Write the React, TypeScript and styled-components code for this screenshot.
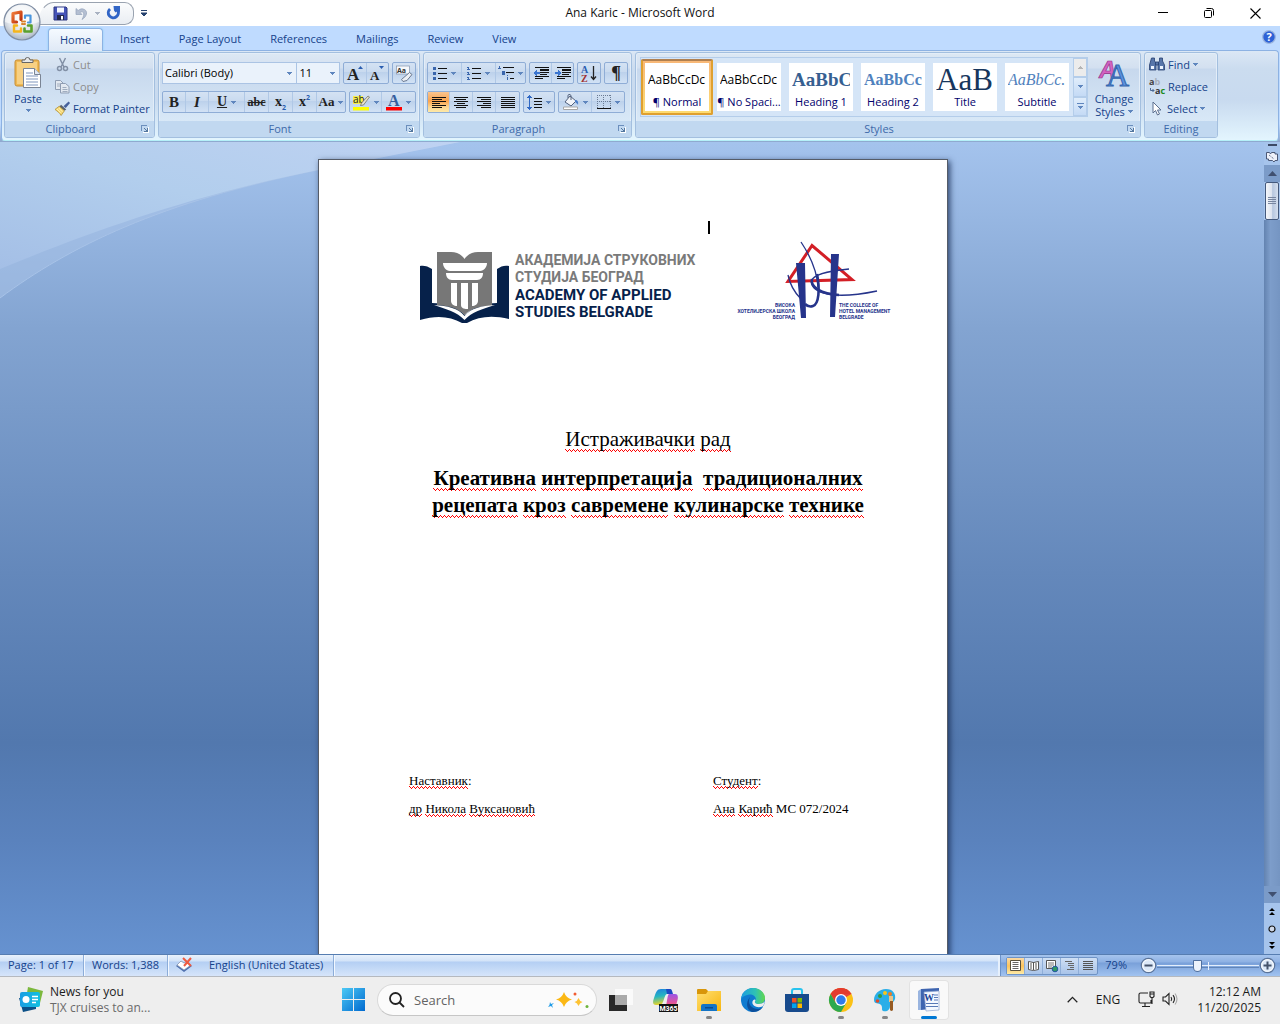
import React from "react";
import styled, { createGlobalStyle, css } from "styled-components";

const ui = `"Open Sans", "Noto Sans", sans-serif`;
const serif = `"Liberation Serif", "Times New Roman", serif`;
const navy = "#15428b";

const GlobalStyle = createGlobalStyle`
  *, *::before, *::after { box-sizing: border-box; }
  body { margin: 0; font-family: ${ui}; font-size: 11px; overflow: hidden; }
  button, input, select { font: inherit; color: inherit; margin: 0; }
  button { border: 0; padding: 0; background: none; cursor: default; }
  svg { display: block; flex: none; overflow: visible; }
`;

/* ---------- window frame ---------- */

const Window = styled.div`
  position: relative;
  display: flex;
  flex-direction: column;
  height: 100vh;
  background: #fff;
`;

const TitleBar = styled.header`
  display: grid;
  grid-template-columns: 1fr auto 1fr;
  align-items: center;
  height: 26px;
  background: #fff;
`;

const TitleText = styled.h1`
  margin: 0;
  font-size: 12px;
  font-weight: 400;
  line-height: 26px;
  color: #111;
`;

const QuickAccess = styled.div`
  display: flex;
  align-items: center;
  gap: 7px;
  padding-left: 38px;
`;

const QuickPill = styled.div`
  display: flex;
  align-items: center;
  gap: 7px;
  height: 23px;
  width: 96px;
  padding-left: 14px;
  border: 1px solid #9aa3b0;
  border-left-color: transparent;
  border-radius: 0 12px 12px 0;
  border-top-left-radius: 20px 30px;
  background: linear-gradient(#fbfcfd, #e9edf2);
`;

const WindowButtons = styled.div`
  display: flex;
  justify-content: flex-end;
  padding-right: 2px;
`;

const WindowButton = styled.button`
  display: grid;
  place-items: center;
  width: 46px;
  height: 26px;
`;

const OfficeButton = styled.button`
  position: absolute;
  left: 2px;
  top: 2px;
  z-index: 2;
`;

const TabBar = styled.nav`
  display: flex;
  align-items: flex-end;
  height: 24px;
  padding: 0 4px 0 46px;
  background: #bfdbff;
`;

const Tab = styled.button<{ $active?: boolean }>`
  height: 22px;
  margin: 0 3px 0 2px;
  padding: 0 11px 2px;
  border: 1px solid transparent;
  border-bottom: 0;
  border-radius: 4px 4px 0 0;
  color: ${navy};
  line-height: 19px;
  white-space: nowrap;
  ${(p) =>
    p.$active &&
    css`
      position: relative;
      z-index: 1;
      height: 23px;
      margin-bottom: -1px;
      border-color: #8db2e3;
      background: linear-gradient(#f5faff, #dfe9f6);
      box-shadow: 0 0 2px #7dd0f5;
    `}
`;

const HelpButton = styled.button`
  margin: 0 0 6px auto;
`;

/* ---------- ribbon ---------- */

const Ribbon = styled.div`
  padding-bottom: 1px;
  background: linear-gradient(#bfdbff 80%, #8ea8ce);
`;

const RibbonPanel = styled.div`
  display: flex;
  gap: 3px;
  margin: 0 1px;
  height: 91px;
  padding: 1px 2px 2px;
  border: 1px solid #8db2e3;
  border-bottom-color: #b4f0f8;
  border-radius: 4px;
  background: linear-gradient(#dbe7f5, #cbdcef 20%, #c8daef 55%, #e3f5fe);
`;

const Group = styled.section<{ $w: number }>`
  display: flex;
  flex-direction: column;
  width: ${(p) => p.$w}px;
  flex: none;
  border: 1px solid #a3bfdf;
  border-radius: 3px;
  box-shadow: inset 0 0 0 1px #e3edf8;
  background: linear-gradient(#dde8f4, #d3e0f0 15px, #c7d8ed 16px, #d8e8f7 68px);
  overflow: hidden;
`;

const GroupBody = styled.div`
  display: flex;
  flex: 1;
`;

const GroupFooter = styled.footer<{ $launcher: boolean }>`
  display: grid;
  grid-template-columns: ${(p) => (p.$launcher ? "1fr 18px" : "1fr")};
  align-items: center;
  height: 16px;
  background: #c1d8f0;
  color: #3e6aaa;
  text-align: center;
`;

const GroupTitle = styled.h2`
  margin: 0;
  font-size: 11px;
  font-weight: 400;
  line-height: 16px;
`;

const LauncherButton = styled.button`
  display: grid;
  place-items: center;
`;

const ToolRows = styled(GroupBody)`
  flex-direction: column;
  gap: 7px;
  padding: 9px 3px 0;
`;

const ToolRow = styled.div`
  display: flex;
  gap: 3px;
`;

const ToolSet = styled.div`
  display: flex;
  height: 22px;
  border: 1px solid #8fadd6;
  border-radius: 2px;
  background: linear-gradient(#d4e2f3, #c9daef 45%, #bcd1eb 46%, #d2e2f5);
`;

const ToolButton = styled.button<{ $w: number; $on?: boolean }>`
  display: flex;
  align-items: center;
  justify-content: center;
  gap: 4px;
  width: ${(p) => p.$w}px;
  height: 20px;
  border-right: 1px solid #b0c8e6;
  &:last-child {
    border-right: 0;
  }
  ${(p) => p.$on && `background: linear-gradient(#f9c48f, #fba34c 45%, #fdd58f 75%, #fde9a8);`}
`;

const Glyph = styled.span<{ $size?: number; $italic?: boolean; $line?: string }>`
  font-family: ${serif};
  font-weight: 700;
  font-size: ${(p) => p.$size ?? 15}px;
  line-height: 18px;
  font-style: ${(p) => (p.$italic ? "italic" : "normal")};
  text-decoration: ${(p) => p.$line ?? "none"};
  color: #222;
  sub,
  sup {
    font-family: ${ui};
    font-size: 7px;
    line-height: 0;
    color: #2a5db0;
  }
`;

const ComboBox = styled.label<{ $w: number }>`
  display: grid;
  grid-template-columns: 1fr 14px;
  align-items: center;
  width: ${(p) => p.$w}px;
  height: 22px;
  border: 1px solid #abc4e4;
  background: #eaf2fb;
  & + & {
    margin-left: -4px;
  }
  svg {
    grid-area: 1 / 2;
    justify-self: center;
    pointer-events: none;
  }
`;

const ComboSelect = styled.select`
  grid-area: 1 / 1 / 2 / 3;
  height: 20px;
  padding: 0 2px 2px;
  border: 0;
  appearance: none;
  background: transparent;
  color: #000;
`;

const CommandColumn = styled.div`
  display: flex;
  flex-direction: column;
  flex: 1;
  padding-top: 1px;
`;

const Command = styled.button<{ $off?: boolean }>`
  display: flex;
  align-items: center;
  gap: 3px;
  height: 22px;
  padding: 0 4px 2px;
  color: ${(p) => (p.$off ? "#8d8d8d" : navy)};
  white-space: nowrap;
`;

const BigButton = styled.button<{ $w: number }>`
  display: flex;
  flex-direction: column;
  align-items: center;
  width: ${(p) => p.$w}px;
  padding-top: 4px;
  color: ${navy};
  line-height: 13px;
  & > svg:first-child {
    margin-bottom: 3px;
  }
  & > svg:last-child {
    margin-top: 4px;
  }
`;

const BigLabel = styled.span`
  display: flex;
  align-items: center;
  gap: 3px;
`;

const Gallery = styled.div`
  display: flex;
  height: 60px;
  margin: 4px 2px 0 4px;
  border: 1px solid #b4cdea;
  background: #d5e5f7;
`;

const StyleCard = styled.button<{ $on?: boolean }>`
  display: flex;
  width: 72px;
  height: 56px;
  margin-top: 1px;
  padding: 4px;
  border-radius: 2px;
  ${(p) =>
    p.$on &&
    css`
      padding: 2px;
      border: 2px solid #dfa030;
      border-top-color: #b08050;
      background: linear-gradient(#f8b878, #fddc72);
    `}
`;

const StyleFace = styled.span`
  display: flex;
  flex-direction: column;
  justify-content: flex-end;
  width: 64px;
  height: 48px;
  padding: 0 3px 2px;
  background: #fff;
  color: #00006b;
  text-align: center;
  white-space: nowrap;
  overflow: hidden;
`;

const Preview = styled.span<{ $color: string; $size: number; $serif?: boolean; $bold?: boolean; $italic?: boolean }>`
  display: block;
  height: 28px;
  line-height: 28px;
  overflow: hidden;
  text-align: left;
  font-family: ${(p) => (p.$serif ? serif : ui)};
  font-size: ${(p) => p.$size}px;
  font-weight: ${(p) => (p.$bold ? 700 : 400)};
  font-style: ${(p) => (p.$italic ? "italic" : "normal")};
  color: ${(p) => p.$color};
`;

const StyleName = styled.span`
  line-height: 15px;
  margin: 0 -3px;
`;

const GalleryScroll = styled.div`
  display: grid;
  grid-template-rows: repeat(3, 1fr);
  width: 14px;
`;

const GalleryStep = styled.button<{ $off?: boolean }>`
  display: grid;
  place-items: center;
  border: 1px solid #b4cdea;
  background: ${(p) => (p.$off ? "#ececec" : "linear-gradient(#e0edfb, #c4daf5)")};
`;

/* ---------- document ---------- */

const Workspace = styled.main`
  position: relative;
  display: flex;
  flex: 1;
  min-height: 0;
  background: linear-gradient(#a4c3ed, #83a4d1 23%, #6488bb 53%, #5278ae 74%, #5a82bd 86%, #6692d0);
`;

const Swoosh = styled.svg`
  position: absolute;
  left: 0;
  top: 0;
`;

const Scroller = styled.div`
  position: relative;
  flex: 1;
  padding-left: 2px;
  overflow: hidden;
`;

const Paper = styled.article`
  width: 630px;
  height: 894px;
  margin: 17px auto 0;
  padding: 61px 60px 0 90px;
  border: 1px solid #555c68;
  background: #fff;
  box-shadow: 2px 2px 6px rgba(20, 40, 80, 0.8);
  font-family: ${serif};
  color: #000;
`;

const Caret = styled.div`
  width: 2px;
  height: 13px;
  margin: 0 0 8px 299px;
  background: #000;
`;

const Logos = styled.div`
  display: flex;
  align-items: flex-start;
  justify-content: space-between;
  height: 84px;
  padding: 0 2px 0 11px;
`;

const Academy = styled.div`
  display: flex;
  gap: 6px;
  padding-top: 9px;
`;

const AcademyName = styled.div`
  padding-top: 1px;
  font-family: Roboto, sans-serif;
  font-weight: 700;
  font-size: 14px;
  line-height: 17px;
  color: #7a7a7a;
  white-space: nowrap;
`;

const AcademyLatin = styled.div`
  padding-top: 1px;
  color: #06214a;
  font-size: 15px;
`;

const Kind = styled.p`
  margin: 100px 0 12px;
  font-size: 21px;
  line-height: 27px;
  text-align: center;
`;

const Topic = styled.h3`
  margin: 0 0 248px;
  font-size: 21px;
  line-height: 27px;
  text-align: center;
  white-space: nowrap;
`;

const People = styled.div`
  display: grid;
  grid-template-columns: 304px 1fr;
  font-size: 13px;
  line-height: 28px;
  white-space: nowrap;
`;

const Misspelt = styled.span`
  padding-bottom: 1px;
  background:
    linear-gradient(90deg, #f00 1px, transparent 1px) 0 calc(100% - 2px) / 4px 1px repeat-x,
    linear-gradient(90deg, #f00 1px, transparent 1px) 1px calc(100% - 1px) / 2px 1px repeat-x,
    linear-gradient(90deg, #f00 1px, transparent 1px) 2px 100% / 4px 1px repeat-x;
`;

const ScrollColumn = styled.div`
  position: relative;
  display: flex;
  flex-direction: column;
  width: 16px;
  background: #a6c4ec;
`;

const ScrollStep = styled.button<{ $h: number; $track?: boolean }>`
  display: grid;
  place-items: center;
  height: ${(p) => p.$h}px;
  background: ${(p) => (p.$track ? "#7b9bc8" : "transparent")};
`;

const Track = styled.div`
  flex: 1;
  background: linear-gradient(90deg, #6383b0, #7d9dca 40%, #7595c2);
`;

const Thumb = styled.div`
  display: grid;
  place-items: center;
  height: 38px;
  margin: 0 1px;
  border: 1px solid #44597c;
  border-radius: 2px;
  background: linear-gradient(90deg, #f4f6fa, #dbe2ee 50%, #b6c6de 55%, #d5dfee);
`;

/* ---------- status bar ---------- */

const StatusBar = styled.footer`
  display: flex;
  height: 23px;
  border-top: 1px solid #567db1;
  border-bottom: 1px solid #b5b9bf;
  background: linear-gradient(#e8f1fc, #d3e3f8 6px, #b4cff3 7px, #d6e5fa);
  color: ${navy};
`;

const StatusItem = styled.button<{ $w: number }>`
  display: flex;
  align-items: center;
  width: ${(p) => p.$w}px;
  padding: 0 0 2px 8px;
  border-right: 1px solid #8cadd9;
  box-shadow: 1px 0 #f2f8ff;
  white-space: nowrap;
`;

const StatusRight = styled.div`
  display: flex;
  align-items: center;
  gap: 7px;
  margin-left: auto;
  padding: 0 4px 0 5px;
  border-left: 1px solid #6d93c9;
  box-shadow: -2px 0 #e6f0fc;
  background: linear-gradient(#a5c4ee, #8eb1e3 7px, #79a0d9 8px, #a1c3f0);
`;

const Views = styled.div`
  display: flex;
  border: 1px solid #6f93c5;
  border-radius: 2px;
  background: linear-gradient(#cfdff4, #a9c4e9);
`;

const ViewButton = styled.button<{ $on?: boolean }>`
  display: grid;
  place-items: center;
  width: 18px;
  height: 16px;
  border-right: 1px solid #8faed8;
  background: ${(p) => (p.$on ? "linear-gradient(#fbd9a4, #fcc45c, #fdeaa8)" : "none")};
  &:last-child {
    border-right: 0;
  }
`;

const ZoomLevel = styled.button`
  padding-bottom: 2px;
`;

const ZoomControls = styled.div`
  display: flex;
  align-items: center;
  margin-left: 6px;
`;

const ZoomRange = styled.input`
  width: 102px;
  height: 16px;
  appearance: none;
  background:
    linear-gradient(#eaf2fc, #eaf2fc) 50% 50% / 1px 8px no-repeat,
    linear-gradient(#e4eefb, #e4eefb) 0 50% / 100% 1px no-repeat,
    linear-gradient(#6285b8, #6285b8) 0 9px / 100% 1px no-repeat;
  &::-webkit-slider-thumb {
    appearance: none;
    width: 9px;
    height: 12px;
    border: 1px solid #50709f;
    border-radius: 1px 1px 5px 5px;
    background: #edf3fb;
  }
`;

/* ---------- taskbar ---------- */

const Taskbar = styled.footer`
  display: grid;
  grid-template-columns: 1fr auto 1fr;
  align-items: center;
  height: 47px;
  padding-bottom: 2px;
  background: #eee;
  color: #1b1b1b;
  font-size: 12px;
`;

const News = styled.button`
  display: flex;
  align-items: center;
  gap: 7px;
  padding-left: 18px;
  text-align: left;
  line-height: 16px;
`;

const NewsDetail = styled.span`
  display: block;
  color: #6a6a6a;
`;

const Apps = styled.div`
  display: flex;
  align-items: center;
  gap: 4px;
  padding-left: 2px;
`;

const AppButton = styled.button<{ $state?: "open" | "active" }>`
  position: relative;
  display: grid;
  place-items: center;
  width: 40px;
  height: 40px;
  border-radius: 4px;
  ${(p) => p.$state === "active" && `background: #f9f9f9; box-shadow: inset 0 0 0 1px #e2e2e2;`}
  ${(p) =>
    p.$state &&
    css`
      &::after {
        content: "";
        position: absolute;
        bottom: 1px;
        width: ${p.$state === "active" ? 16 : 6}px;
        height: 3px;
        border-radius: 2px;
        background: ${p.$state === "active" ? "#0078d4" : "#858585"};
      }
    `}
`;

const SearchBox = styled.label`
  display: flex;
  align-items: center;
  gap: 9px;
  width: 220px;
  height: 32px;
  padding: 0 7px 0 11px;
  border: 1px solid #d9d9d9;
  border-bottom-color: #c6c6c6;
  border-radius: 16px;
  background: #fbfbfb;
`;

const SearchInput = styled.input`
  flex: 1;
  min-width: 0;
  padding: 0;
  border: 0;
  outline: 0;
  background: none;
  font-size: 13px;
  &::placeholder {
    color: #636363;
    opacity: 1;
  }
`;

const Tray = styled.div`
  display: flex;
  align-items: center;
  justify-content: flex-end;
  gap: 18px;
  padding-right: 19px;
`;

const TrayIcons = styled.button`
  display: flex;
  gap: 7px;
`;

const Clock = styled.button`
  text-align: right;
  line-height: 16px;
`;

/* ---------- icons ---------- */

const Arrow = ({ color = "#5f86be", up = false }: { color?: string; up?: boolean }) => (
  <svg width="5" height="3" viewBox="0 0 5 3" shapeRendering="crispEdges">
    <path d={up ? "M2 0h1v1h1v1h1v1H0V2h1V1h1z" : "M0 0h5v1H4v1H3v1H2V2H1V1H0z"} fill={color} />
  </svg>
);

const Launcher = () => (
  <svg width="8" height="8" viewBox="0 0 8 8" shapeRendering="crispEdges">
    <path d="M0 6V0h6v1H1v5z" fill="#6c8fbd" />
    <path d="M3 3h1v1h1v1h1V3h1v4H3V6h2V5H4V4H3z" fill="#54779f" />
    <path d="M2 7h6v1H2zM7 2h1v6H7z" fill="#fff" />
  </svg>
);

/* horizontal strokes given as [x, y, width] */
const Strokes = ({ w, h, lines, color = "#111", children }: { w: number; h: number; lines: number[][]; color?: string; children?: React.ReactNode }) => (
  <svg width={w} height={h} viewBox={`0 0 ${w} ${h}`} shapeRendering="crispEdges">
    {lines.map(([x, y, n]) => (
      <rect key={`${x}-${y}`} x={x} y={y} width={n} height="1" fill={color} />
    ))}
    {children}
  </svg>
);

const AlignIcon = ({ mode }: { mode: "l" | "c" | "r" | "j" }) => {
  const widths = mode === "j" ? [14, 14, 14, 14, 14, 14] : [14, 10, 14, 8, 14, 10];
  const x = (n: number) => (mode === "r" ? 14 - n : mode === "c" ? (14 - n) / 2 : 0);
  return <Strokes w={14} h={11} lines={widths.map((n, i) => [x(n), i * 2, n])} />;
};

const OfficeOrb = () => (
  <svg width="40" height="40" viewBox="0 0 40 40">
    <defs>
      <radialGradient id="orb" cx=".5" cy=".35" r=".7">
        <stop offset="0" stopColor="#fff" />
        <stop offset=".6" stopColor="#dfe4ea" />
        <stop offset="1" stopColor="#9daabb" />
      </radialGradient>
      <linearGradient id="orbRed" x2="1" y2="1">
        <stop stopColor="#f07a3a" />
        <stop offset="1" stopColor="#b92b05" />
      </linearGradient>
    </defs>
    <circle cx="20" cy="20" r="18" fill="url(#orb)" stroke="#7f8da3" strokeWidth="1.2" />
    <path d="M3 20a17 17 0 0134 0c-10 4-24 4-34 0z" fill="#fff" opacity=".55" />
    <g fill="none" strokeLinejoin="round" strokeLinecap="round">
      <path d="M14.500 20H11v-8.500l8-1.500v7.500" stroke="url(#orbRed)" strokeWidth="3.200" />
      <path d="M23 16v-2.500h5.500v7H26" stroke="#4a95dc" strokeWidth="2.200" />
      <path d="M15 23.500h-3v6h7v-3" stroke="#f5b51c" strokeWidth="2.400" />
      <path d="M26 23.500h3.500v6h-7v-3" stroke="#5aa02c" strokeWidth="2.600" />
      <path d="M20 19.500h1M22.500 19.500h.5M20 22h1M22.500 22h.5" stroke="#d9822a" strokeWidth="2" />
    </g>
  </svg>
);

const SaveIcon = () => (
  <svg width="15" height="15" viewBox="0 0 15 15">
    <path d="M1 1h12l1 1v12H1z" fill="#4553b8" stroke="#2f3880" />
    <path d="M4 1.500h7v5H4z" fill="#f3f6ff" />
    <path d="M4 9h7v5H4z" fill="#23294f" />
    <path d="M8 10h2v3.500H8z" fill="#fff" />
  </svg>
);

const UndoIcon = () => (
  <svg width="13" height="13" viewBox="0 0 13 13" fill="none">
    <path d="M1 1.500v6h6L5 5.500c3-2 5 .5 3 5l-1 2c5-3 6-8 2.500-10C7 1.200 5 2 3.200 3.500z" fill="#b4bfd2" stroke="#93a2ba" strokeWidth=".7" />
  </svg>
);

const RedoIcon = () => (
  <svg width="14" height="14" viewBox="0 0 14 14" fill="none">
    <path d="M3 3A5 5 0 1010.500 4" stroke="#3165c6" strokeWidth="3" />
    <path d="M6.500 0H13v6L10.500 5 8.500 6.500 7 4.500z" fill="#3165c6" />
  </svg>
);

const PasteIcon = () => (
  <svg width="28" height="32" viewBox="0 0 28 32">
    <rect x="1" y="3" width="24" height="26" rx="2" fill="#efb954" stroke="#c78e35" />
    <rect x="3" y="5" width="20" height="22" fill="#f7d083" />
    <path d="M8 5V3h3a2.500 2.500 0 015 0h3v2.500H8z" fill="#e8e8e8" stroke="#666" />
    <path d="M9.500 11.500h11l6 6v13h-17z" fill="#fff" stroke="#7a8494" />
    <path d="M20.500 11.500v6h6" fill="#dfe7f2" stroke="#7a8494" />
    <path d="M12 16h7M12 19h12M12 22h12M12 25h12M12 28h12" stroke="#7f96bd" />
  </svg>
);

const CutIcon = () => (
  <svg width="15" height="15" viewBox="0 0 15 15" fill="none" stroke="#8290a6" strokeWidth="1.500">
    <path d="M4.500 1l4.500 9M10.500 1L6 10" />
    <circle cx="4.500" cy="11.500" r="2" />
    <circle cx="10.500" cy="11.500" r="2" />
  </svg>
);

const CopyIcon = () => (
  <svg width="15" height="15" viewBox="0 0 15 15" fill="#e3e9f1" stroke="#8f9db3">
    <path d="M.5 1.500h5l3 3v6h-8z" />
    <path d="M5.500 4.500h5l3.500 3v6.500H5.500z" />
    <path d="M2 5h3M2 7h3M7.500 8.500h4M7.500 10.500h5M7.500 12.500h5" strokeWidth=".8" />
  </svg>
);

const PainterIcon = () => (
  <svg width="15" height="15" viewBox="0 0 16 15">
    <path d="M14.500 0L16 1.500 11.500 7 9 5z" fill="#46619b" />
    <path d="M6.500 3.500L12 8.500 10 10 4.500 5.500z" fill="#5b626e" />
    <path d="M4.500 5L10 10l-3.500 5C5 12 3 11 0 8.500z" fill="#f4d673" stroke="#a68325" strokeWidth=".7" />
    <path d="M2 8l4 4M4 7l4 4" stroke="#fff4c0" />
  </svg>
);

const ClearIcon = () => (
  <svg width="17" height="17" viewBox="0 0 17 17">
    <rect x=".5" y="1" width="13" height="8" fill="#f7f9fc" stroke="#8293ad" strokeWidth=".7" />
    <text x="1" y="8" fontSize="7" fontWeight="700" fontFamily="Open Sans, sans-serif" fill="#333">Aa</text>
    <path d="M13.500 7.500l2.500 2-5 6-4 1-1.500-2z" fill="#eceff5" stroke="#69788f" />
  </svg>
);

const ListIcon = ({ numbered }: { numbered?: boolean }) => (
  <Strokes w={14} h={13} lines={[[5, 1, 9], [5, 6, 9], [5, 11, 9]]}>
    {[0, 5, 10].map((y) => (
      <path key={y} d={numbered ? `M1 ${y}h1v3H1zM0 ${y + 2}h3v1H0zM0 ${y}h1v1H0z` : `M0 ${y}h3v3H0z`} fill="#3a66ad" />
    ))}
  </Strokes>
);

const MultiIcon = () => (
  <Strokes w={16} h={14} lines={[[5, 1, 11], [8, 6, 8], [12, 12, 4]]}>
    <path d="M1 0h1v3H1zM0 2h3v1H0zM4 5h3v4H4zM9 9h1v1H9zM9 11h1v3H9z" fill="#3a66ad" />
  </Strokes>
);

const IndentIcon = ({ right }: { right?: boolean }) => (
  <Strokes w={16} h={13} lines={[[2, 0, 14], [7, 2, 9], [7, 3, 9], [7, 5, 9], [7, 7, 7], [2, 9, 14], [2, 11, 8]]}>
    <path d={right ? "M0 5h3V3l4 3-4 3V7H0z" : "M7 5H4V3L0 6l4 3V7h3z"} fill="#3a75d0" />
  </Strokes>
);

const SortIcon = () => (
  <svg width="16" height="17" viewBox="0 0 16 17">
    <text x="0" y="8" fontSize="10" fontWeight="700" fontFamily="Liberation Serif, serif" fill="#2a5db0">A</text>
    <text x="0" y="17" fontSize="10" fontWeight="700" fontFamily="Liberation Serif, serif" fill="#a03030">Z</text>
    <path d="M12.500 1v13M10 11.500l2.500 3 2.500-3" stroke="#222" strokeWidth="1.300" fill="none" />
  </svg>
);

const SpacingIcon = () => (
  <Strokes w={15} h={15} lines={[[7, 3, 8], [7, 6, 8], [7, 9, 8], [7, 12, 8]]}>
    <path d="M2 3h1v9H2zM2 0h1v1h1v1h1v1H0V2h1V1h1zM0 12h5v1H4v1H3v1H2v-1H1v-1H0z" fill="#2f68c4" />
  </Strokes>
);

const BucketIcon = () => (
  <svg width="16" height="16" viewBox="0 0 16 16">
    <path d="M7 2l6 5-5 5-6-4z" fill="#f2f5fa" stroke="#52617c" />
    <path d="M5 4V1.500C5 0 8 0 8 2v4" fill="none" stroke="#52617c" />
    <path d="M12 6c3 0 3.500 2 3 5-1-2-2-2-3-3z" fill="#4a7dc9" />
    <path d="M.5 13h14v2.500H.5z" fill="#fff" stroke="#a6a6a6" />
  </svg>
);

const BorderIcon = () => (
  <svg width="14" height="14" viewBox="0 0 14 14" fill="none" shapeRendering="crispEdges">
    <path d="M.5 0v13M6.500 0v13M13.500 0v13M0 .5h14M0 6.500h14" stroke="#6a7b94" strokeDasharray="1 1" />
    <path d="M0 13.500h14" stroke="#111" />
  </svg>
);

const HighlightIcon = () => (
  <svg width="17" height="17" viewBox="0 0 17 17">
    <path d="M0 2h10v8H0z" fill="#f6ee4c" />
    <text x="0" y="9" fontSize="10" fontFamily="Open Sans, sans-serif" fill="#222">ab</text>
    <path d="M15 2l1.500 1-6 8-3 .5 1-2.500z" fill="#e8e4d0" stroke="#665" strokeWidth=".7" />
    <path d="M0 13h16v3.500H0z" fill="#ff0" />
  </svg>
);

const FontColorIcon = () => (
  <svg width="16" height="17" viewBox="0 0 16 17">
    <text x="2" y="12" fontSize="16" fontWeight="700" fontFamily="Liberation Serif, serif" fill="#365f9e">A</text>
    <path d="M0 13h16v3.500H0z" fill="red" />
  </svg>
);

const ChangeStylesIcon = () => (
  <svg width="30" height="32" viewBox="0 0 30 32">
    <text x="0" y="21" fontSize="24" fontWeight="700" fontStyle="italic" fontFamily="Liberation Sans, sans-serif" fill="#d263c0" stroke="#93308a" strokeWidth=".6">A</text>
    <text x="7" y="29" fontSize="32" fontFamily="Liberation Serif, serif" fill="#5c93e0" stroke="#3566ae" strokeWidth="1">A</text>
  </svg>
);

const FindIcon = () => (
  <svg width="16" height="14" viewBox="0 0 16 14" fill="#5876aa" stroke="#263f70" strokeWidth=".8">
    <path d="M2.500 1h3v3l1.500 2v7H.5V8zM10.500 1h3v3l2 4v5H9V6l1.500-2z" />
    <path d="M6.500 5h3v3h-3z" />
    <path d="M2 9h3v3H2zM11 9h3v3h-3z" fill="#eef4ff" stroke="none" />
  </svg>
);

const ReplaceIcon = () => (
  <svg width="16" height="15" viewBox="0 0 16 15" fontFamily="Open Sans, sans-serif" fontWeight="700" fontSize="9">
    <text x="0" y="6"><tspan fill="#444">a</tspan><tspan fill="#a8b0bc">b</tspan></text>
    <text x="6" y="15"><tspan fill="#333">a</tspan><tspan fill="#1c8a1c">c</tspan></text>
    <path d="M1.500 9v2.500H5M3.500 10L5 11.500 3.500 13" stroke="#4a6894" fill="none" />
  </svg>
);

const SelectIcon = () => (
  <svg width="15" height="15" viewBox="0 0 15 15">
    <path d="M4 1v11l2.500-2.500L8.500 14l2-1-2-4H12z" fill="#fff" stroke="#5b6f8f" />
  </svg>
);

const AcademyLogo = () => (
  <svg width="89" height="74" viewBox="0 0 89 74">
    <path d="M0 15c3-1 8 0 12 3v34c12 0 25 3 33 12 8-9 21-12 32-12V18c4-3 8-4 12-3v53c-16-4-30-3-42 4h-5C30 65 16 64 0 69z" fill="#06214a" />
    <path d="M17 1h14c6 0 11 3 13.500 7C47 4 52 1 58 1h14v54c-12 0-21 2-27.500 9C38 57 29 55 17 54z" fill="#777" />
    <path d="M14 54c14 1 24 3 30.500 11C51 57 61 55 75 54c-13 4-23 7-30.500 15C37 61 26 58 14 54z" fill="#fff" />
    <g fill="#fff">
      <path d="M23 12h44c0 4-3 8-7 8H30c-4 0-7-4-7-8zM26 22h37c0 4-2 7-6 7H32c-4 0-6-3-6-7z" />
      <path d="M31 32h6v23c-3 0-6-2-6-5zM41 32h7v26h-1c-3 0-6-1-6-4zM52 32h6v18c0 3-3 5-6 5z" />
    </g>
  </svg>
);

const HotelLogo = () => (
  <svg width="141" height="80" viewBox="0 0 141 80">
    <path d="M68 3.500L44 39.500l64-2z" fill="none" stroke="#d31f26" strokeWidth="3" />
    <g fill="none" stroke="#26348b">
      <path d="M57 0c8 12 16 28 17 45" strokeWidth="1.300" />
      <path d="M73 32c3 15 2 30-4 32-3 1-6 0-8-2" strokeWidth="2.600" />
      <path d="M44 33c2 10 7 18 13 24" strokeWidth="1.300" />
      <path d="M105 27C84 29 69 33 67.500 39 66 47 80 60 133 49" strokeWidth="1.400" />
      <path d="M68 37c-2 8 9 15 27 16" strokeWidth="2.600" />
    </g>
    <path d="M52 21h9l1 55h-5zM87 12h8l-4 63h-5z" fill="#26348b" />
    <g fill="#26348b" fontFamily="'Liberation Sans Narrow', Roboto, sans-serif" fontWeight="700" fontSize="5">
      <text x="51" y="65" textAnchor="end">ВИСОКА</text>
      <text x="51" y="71" textAnchor="end">ХОТЕЛИЈЕРСКА ШКОЛА</text>
      <text x="51" y="77" textAnchor="end">БЕОГРАД</text>
      <text x="95" y="65">THE COLLEGE OF</text>
      <text x="95" y="71">HOTEL MANAGEMENT</text>
      <text x="95" y="77">BELGRADE</text>
    </g>
  </svg>
);

const ZoomGlyph = ({ plus }: { plus?: boolean }) => (
  <svg width="17" height="17" viewBox="0 0 17 17" fill="none">
    <circle cx="8.500" cy="8.500" r="7.200" fill="#dbe8f8" stroke="#5a7399" strokeWidth="1.200" />
    <circle cx="8.500" cy="8.500" r="5.800" stroke="#fff" />
    <path d={plus ? "M4.500 8.500h8M8.500 4.500v8" : "M4.500 8.500h8"} stroke="#45536b" strokeWidth="2" />
  </svg>
);

/* ---------- data ---------- */

const tabs = ["Home", "Insert", "Page Layout", "References", "Mailings", "Review", "View"];

const galleryStyles = [
  { name: "¶ Normal", sample: "AaBbCcDc", color: "#000", size: 12 },
  { name: "¶ No Spaci...", sample: "AaBbCcDc", color: "#000", size: 12 },
  { name: "Heading 1", sample: "AaBbCc", color: "#365f91", size: 19, serif: true, bold: true },
  { name: "Heading 2", sample: "AaBbCc", color: "#4f81bd", size: 16, serif: true, bold: true },
  { name: "Title", sample: "AaB", color: "#17365d", size: 31, serif: true },
  { name: "Subtitle", sample: "AaBbCc.", color: "#4f81bd", size: 16, serif: true, italic: true },
];

const RibbonGroup = ({ title, width, launcher = true, children }: { title: string; width: number; launcher?: boolean; children: React.ReactNode }) => (
  <Group $w={width} aria-label={title}>
    {children}
    <GroupFooter $launcher={launcher}>
      <GroupTitle>{title}</GroupTitle>
      {launcher && (
        <LauncherButton aria-label={`${title} options`}>
          <Launcher />
        </LauncherButton>
      )}
    </GroupFooter>
  </Group>
);

const Tool = ({ label, w, on, menu, children }: { label: string; w: number; on?: boolean; menu?: boolean; children: React.ReactNode }) => (
  <ToolButton $w={w} $on={on} aria-label={label} title={label}>
    {children}
    {menu && <Arrow />}
  </ToolButton>
);

export default function App() {
  return (
    <>
      <GlobalStyle />
      <Window>
        <OfficeButton aria-label="Office menu">
          <OfficeOrb />
        </OfficeButton>
        <TitleBar>
          <QuickAccess>
            <QuickPill>
              <button aria-label="Save"><SaveIcon /></button>
              <button aria-label="Undo"><UndoIcon /></button>
              <Arrow color="#a9b2c2" />
              <button aria-label="Repeat"><RedoIcon /></button>
            </QuickPill>
            <button aria-label="Customize Quick Access Toolbar">
              <svg width="6" height="7" viewBox="0 0 6 7"><path d="M0 .5h6M0 3h6L3 6z" fill="#26436f" stroke="#26436f" /></svg>
            </button>
          </QuickAccess>
          <TitleText>Ana Karic - Microsoft Word</TitleText>
          <WindowButtons>
            <WindowButton aria-label="Minimize">
              <svg width="10" height="10" viewBox="0 0 10 10"><path d="M0 4.500h10" stroke="#000" /></svg>
            </WindowButton>
            <WindowButton aria-label="Restore">
              <svg width="10" height="10" viewBox="0 0 10 10" fill="none" stroke="#000"><rect x=".5" y="2.500" width="7" height="7" rx="1" /><path d="M2.500.5h5a2 2 0 012 2v5" /></svg>
            </WindowButton>
            <WindowButton aria-label="Close">
              <svg width="11" height="11" viewBox="0 0 11 11"><path d="M.5.5l10 10M10.500.5l-10 10" stroke="#000" strokeWidth="1.100" /></svg>
            </WindowButton>
          </WindowButtons>
        </TitleBar>

        <TabBar>
          {tabs.map((t) => (
            <Tab key={t} $active={t === "Home"}>{t}</Tab>
          ))}
          <HelpButton aria-label="Help">
            <svg width="14" height="14" viewBox="0 0 14 14">
              <circle cx="7" cy="7" r="6.300" fill="#2e62d6" stroke="#9db6de" strokeWidth="1.200" />
              <text x="7" y="11" textAnchor="middle" fontSize="11" fontWeight="700" fill="#fff" fontFamily="Open Sans, sans-serif">?</text>
            </svg>
          </HelpButton>
        </TabBar>

        <Ribbon>
          <RibbonPanel>
            <RibbonGroup title="Clipboard" width={151}>
              <GroupBody>
                <BigButton $w={46}>
                  <PasteIcon />
                  <span>Paste</span>
                  <Arrow />
                </BigButton>
                <CommandColumn>
                  <Command $off><CutIcon />Cut</Command>
                  <Command $off><CopyIcon />Copy</Command>
                  <Command><PainterIcon />Format Painter</Command>
                </CommandColumn>
              </GroupBody>
            </RibbonGroup>

            <RibbonGroup title="Font" width={262}>
              <ToolRows>
                <ToolRow>
                  <ComboBox $w={137}>
                    <ComboSelect aria-label="Font"><option>Calibri (Body)</option></ComboSelect>
                    <Arrow />
                  </ComboBox>
                  <ComboBox $w={44}>
                    <ComboSelect aria-label="Font size"><option>11</option></ComboSelect>
                    <Arrow />
                  </ComboBox>
                  <ToolSet>
                    <Tool label="Grow font" w={23}>
                      <svg width="17" height="16" viewBox="0 0 17 16"><text x="0" y="15" fontSize="17" fontWeight="700" fontFamily="Liberation Serif, serif" fill="#222">A</text><path d="M11 4l2.500-3L16 4z" fill="#2a5db0" /></svg>
                    </Tool>
                    <Tool label="Shrink font" w={21}>
                      <svg width="15" height="16" viewBox="0 0 15 16"><text x="0" y="15" fontSize="13" fontWeight="700" fontFamily="Liberation Serif, serif" fill="#222">A</text><path d="M9 1l2.500 3L14 1z" fill="#2a5db0" /></svg>
                    </Tool>
                  </ToolSet>
                  <ToolSet><Tool label="Clear formatting" w={22}><ClearIcon /></Tool></ToolSet>
                </ToolRow>
                <ToolRow>
                  <ToolSet>
                    <Tool label="Bold" w={23}><Glyph>B</Glyph></Tool>
                    <Tool label="Italic" w={23}><Glyph $italic>I</Glyph></Tool>
                    <Tool label="Underline" w={36} menu><Glyph $line="underline" $size={14}>U</Glyph></Tool>
                    <Tool label="Strikethrough" w={24}><Glyph $line="line-through" $size={12}>abc</Glyph></Tool>
                    <Tool label="Subscript" w={24}><Glyph $size={14}>x<sub>2</sub></Glyph></Tool>
                    <Tool label="Superscript" w={24}><Glyph $size={14}>x<sup>2</sup></Glyph></Tool>
                    <Tool label="Change case" w={28} menu><Glyph $size={13}>Aa</Glyph></Tool>
                  </ToolSet>
                  <ToolSet>
                    <Tool label="Highlight" w={32} menu><HighlightIcon /></Tool>
                    <Tool label="Font color" w={33} menu><FontColorIcon /></Tool>
                  </ToolSet>
                </ToolRow>
              </ToolRows>
            </RibbonGroup>

            <RibbonGroup title="Paragraph" width={209}>
              <ToolRows>
                <ToolRow>
                  <ToolSet>
                    <Tool label="Bullets" w={34} menu><ListIcon /></Tool>
                    <Tool label="Numbering" w={34} menu><ListIcon numbered /></Tool>
                    <Tool label="Multilevel list" w={29} menu><MultiIcon /></Tool>
                  </ToolSet>
                  <ToolSet>
                    <Tool label="Decrease indent" w={22}><IndentIcon /></Tool>
                    <Tool label="Increase indent" w={21}><IndentIcon right /></Tool>
                  </ToolSet>
                  <ToolSet><Tool label="Sort" w={22}><SortIcon /></Tool></ToolSet>
                  <ToolSet><Tool label="Show marks" w={22}><Glyph $size={18}>¶</Glyph></Tool></ToolSet>
                </ToolRow>
                <ToolRow>
                  <ToolSet>
                    <Tool label="Align left" w={22} on><AlignIcon mode="l" /></Tool>
                    <Tool label="Center" w={23}><AlignIcon mode="c" /></Tool>
                    <Tool label="Align right" w={23}><AlignIcon mode="r" /></Tool>
                    <Tool label="Justify" w={23}><AlignIcon mode="j" /></Tool>
                  </ToolSet>
                  <ToolSet><Tool label="Line spacing" w={30} menu><SpacingIcon /></Tool></ToolSet>
                  <ToolSet>
                    <Tool label="Shading" w={33} menu><BucketIcon /></Tool>
                    <Tool label="Borders" w={32} menu><BorderIcon /></Tool>
                  </ToolSet>
                </ToolRow>
              </ToolRows>
            </RibbonGroup>

            <RibbonGroup title="Styles" width={506}>
              <GroupBody>
                <Gallery>
                  {galleryStyles.map((s, i) => (
                    <StyleCard key={s.name} $on={i === 0}>
                      <StyleFace>
                        <Preview $color={s.color} $size={s.size} $serif={s.serif} $bold={s.bold} $italic={s.italic}>{s.sample}</Preview>
                        <StyleName>{s.name}</StyleName>
                      </StyleFace>
                    </StyleCard>
                  ))}
                  <GalleryScroll>
                    <GalleryStep $off aria-label="Previous styles"><Arrow up color="#b5b5b5" /></GalleryStep>
                    <GalleryStep aria-label="Next styles"><Arrow /></GalleryStep>
                    <GalleryStep aria-label="More styles">
                      <svg width="7" height="6" viewBox="0 0 7 6" shapeRendering="crispEdges"><path d="M0 0h7v1H0zM1 3h5v1H5v1H4v1H3V5H2V4H1z" fill="#5f86be" /></svg>
                    </GalleryStep>
                  </GalleryScroll>
                </Gallery>
                <BigButton $w={48}>
                  <ChangeStylesIcon />
                  <BigLabel>Change</BigLabel>
                  <BigLabel>Styles <Arrow /></BigLabel>
                </BigButton>
              </GroupBody>
            </RibbonGroup>

            <RibbonGroup title="Editing" width={74} launcher={false}>
              <CommandColumn>
                <Command><FindIcon />Find <Arrow /></Command>
                <Command><ReplaceIcon />Replace</Command>
                <Command><SelectIcon />Select <Arrow /></Command>
              </CommandColumn>
            </RibbonGroup>
          </RibbonPanel>
        </Ribbon>

        <Workspace>
          <Swoosh width="470" height="170" viewBox="0 0 470 170" aria-hidden="true">
            <defs>
              <linearGradient id="sky" x1="0" y1="1" x2="1" y2="0">
                <stop offset="0" stopColor="#a4bfe6" />
                <stop offset=".5" stopColor="#b2ceed" />
                <stop offset="1" stopColor="#bfd2f2" />
              </linearGradient>
            </defs>
            <path d="M0 156C70 104 160 60 318 28L460 0H0z" fill="#a9c4e8" opacity=".5" />
            <path d="M0 156C70 104 160 60 318 28" fill="none" stroke="#a8c3e8" />
            <path d="M0 127C90 90 190 54 318 28L460 0H0z" fill="url(#sky)" />
          </Swoosh>
          <Scroller>
            <Paper>
              <Caret />
              <Logos>
                <Academy>
                  <AcademyLogo />
                  <AcademyName>
                    АКАДЕМИЈА СТРУКОВНИХ<br />СТУДИЈА БЕОГРАД
                    <AcademyLatin>ACADEMY OF APPLIED<br />STUDIES BELGRADE</AcademyLatin>
                  </AcademyName>
                </Academy>
                <HotelLogo />
              </Logos>
              <Kind><Misspelt>Истраживачки</Misspelt> <Misspelt>рад</Misspelt></Kind>
              <Topic>
                <Misspelt>Креативна</Misspelt> <Misspelt>интерпретација</Misspelt>&nbsp; <Misspelt>традиционалних</Misspelt>
                <br />
                <Misspelt>рецепата</Misspelt> <Misspelt>кроз</Misspelt> <Misspelt>савремене</Misspelt> <Misspelt>кулинарске</Misspelt> <Misspelt>технике</Misspelt>
              </Topic>
              <People>
                <span><Misspelt>Наставник</Misspelt>:</span>
                <span><Misspelt>Студент</Misspelt>:</span>
                <span><Misspelt>др</Misspelt> <Misspelt>Никола</Misspelt> <Misspelt>Вуксановић</Misspelt></span>
                <span><Misspelt>Ана</Misspelt> <Misspelt>Карић</Misspelt> МС 072/2024</span>
              </People>
            </Paper>
          </Scroller>
          <ScrollColumn>
            <ScrollStep $h={6} aria-label="Split"><svg width="9" height="2"><path d="M0 0h9v2H0z" fill="#3c4a66" /></svg></ScrollStep>
            <ScrollStep $h={17} aria-label="View ruler">
              <svg width="12" height="12" viewBox="0 0 12 12"><path d="M.5 1.500h3l1 1.500 1-1.500H9v1.500h2.500v6.500H9L8 11l-1.500-1.500h-4V8h-2z" fill="#eef1fa" stroke="#4b5876" /><path d="M3 4l5 4" stroke="#4b5876" strokeDasharray="1 1" /></svg>
            </ScrollStep>
            <ScrollStep $h={17} $track aria-label="Scroll up"><svg width="9" height="5"><path d="M0 5l4.500-5L9 5z" fill="#3f4f6f" /></svg></ScrollStep>
            <Thumb><svg width="8" height="8" shapeRendering="crispEdges"><path d="M0 0h8v1H0zM0 2h8v1H0zM0 4h8v1H0zM0 6h8v1H0z" fill="#7886a0" /></svg></Thumb>
            <Track />
            <ScrollStep $h={17} $track aria-label="Scroll down"><svg width="9" height="5"><path d="M0 0l4.500 5L9 0z" fill="#3f4f6f" /></svg></ScrollStep>
            <ScrollStep $h={17} aria-label="Previous page"><svg width="6" height="7"><path d="M0 3l3-3 3 3zM0 7l3-3 3 3z" /></svg></ScrollStep>
            <ScrollStep $h={17} aria-label="Browse object"><svg width="8" height="8"><circle cx="4" cy="4" r="3" fill="#cfd9ea" stroke="#111" strokeWidth="1.200" /></svg></ScrollStep>
            <ScrollStep $h={17} aria-label="Next page"><svg width="6" height="7"><path d="M0 0l3 3 3-3zM0 4l3 3 3-3z" /></svg></ScrollStep>
          </ScrollColumn>
        </Workspace>

        <StatusBar>
          <StatusItem $w={84}>Page: 1 of 17</StatusItem>
          <StatusItem $w={84}>Words: 1,388</StatusItem>
          <StatusItem $w={166}>
            <svg width="33" height="16" viewBox="0 0 33 16">
              <path d="M0 9l5-5 3 2 2-1 6 4-8 6z" fill="#4d6fae" />
              <path d="M1 8l4-4 3 2 2-1 5 3-7 5z" fill="#fff" stroke="#8592ab" strokeWidth=".7" />
              <path d="M7 1l8 8M15 1L8 9" stroke="#ee5b40" strokeWidth="2" />
            </svg>
            English (United States)
          </StatusItem>
          <StatusRight>
            <Views>
              <ViewButton $on aria-label="Print layout">
                <svg width="11" height="11" viewBox="0 0 11 11"><path d="M.5.5h10v10H.5z" fill="#fff" stroke="#59513c" /><path d="M2.500 2.500h6M2.500 4.500h6M2.500 6.500h6M2.500 8.500h6" stroke="#666" /></svg>
              </ViewButton>
              <ViewButton aria-label="Full screen reading">
                <svg width="11" height="11" viewBox="0 0 11 11"><path d="M.5 1.500l5 1 5-1v8l-5 1-5-1z" fill="#fff" stroke="#555" /><path d="M5.500 2v8M2 4h2M2 6h2M2 8h2M7 4h2M7 6h2M7 8h2" stroke="#555" /></svg>
              </ViewButton>
              <ViewButton aria-label="Web layout">
                <svg width="12" height="12" viewBox="0 0 12 12"><path d="M.5.500h9v8h-9z" fill="#fff" stroke="#555" /><path d="M2 3h6M2 5h6M2 7h4" stroke="#777" /><circle cx="9" cy="9" r="2.800" fill="#2f9a66" stroke="#2356a0" /></svg>
              </ViewButton>
              <ViewButton aria-label="Outline"><Strokes w={9} h={9} color="#666" lines={[[0, 0, 7], [3, 2, 6], [3, 4, 6], [5, 6, 4], [2, 8, 7]]} /></ViewButton>
              <ViewButton aria-label="Draft"><Strokes w={10} h={9} color="#555" lines={[[0, 0, 10], [0, 2, 10], [0, 4, 10], [0, 6, 10], [0, 8, 10]]} /></ViewButton>
            </Views>
            <ZoomLevel>79%</ZoomLevel>
            <ZoomControls>
              <button aria-label="Zoom out"><ZoomGlyph /></button>
              <ZoomRange type="range" min={10} max={190} defaultValue={79} aria-label="Zoom" />
              <button aria-label="Zoom in"><ZoomGlyph plus /></button>
            </ZoomControls>
          </StatusRight>
        </StatusBar>

        <Taskbar>
          <News>
            <svg width="25" height="25" viewBox="0 0 25 25">
              <defs><linearGradient id="nw" x2="1"><stop stopColor="#1b9de2" /><stop offset="1" stopColor="#0fc0e0" /></linearGradient></defs>
              <path d="M10 0l15 4-3 12-14-4z" fill="#7cb83d" />
              <path d="M1 11l17-1v12L5 25z" fill="#0b4f86" />
              <rect x="2" y="5" width="20" height="15" rx="2" fill="url(#nw)" />
              <circle cx="8" cy="12.500" r="3.500" fill="#fff" />
              <path d="M14 9.500h6M14 12.500h6M14 15.500h4" stroke="#fff" strokeWidth="1.600" />
            </svg>
            <span>News for you<NewsDetail>TJX cruises to an...</NewsDetail></span>
          </News>
          <Apps>
            <AppButton aria-label="Start">
              <svg width="23" height="23" viewBox="0 0 23 23">
                <defs><linearGradient id="st" x2="1" y2="1"><stop stopColor="#4cc9f5" /><stop offset="1" stopColor="#0069cf" /></linearGradient></defs>
                <path d="M0 0h11v11H0zM12 0h11v11H12zM0 12h11v11H0zM12 12h11v11H12z" fill="url(#st)" />
              </svg>
            </AppButton>
            <SearchBox>
              <svg width="16" height="16" viewBox="0 0 16 16" fill="none" stroke="#222" strokeWidth="1.800"><circle cx="6.500" cy="6.500" r="5.500" /><path d="M10.500 10.500L15 15" /></svg>
              <SearchInput placeholder="Search" aria-label="Search" />
              <svg width="41" height="18" viewBox="0 0 41 18">
                <path d="M16 1q2 6 8 7.500-6 1.500-8 7.500-2-6-8-7.500Q14 7 16 1z" fill="#fbb815" />
                <path d="M30.500 7q1 3 4 4-3 1-4 4-1-3-4-4 3-1 4-4z" fill="#fdc334" />
                <path d="M2 11l1 2 3-1-2 2 1 3-2-2-3 1 1.500-2z" fill="#1e9be8" />
                <circle cx="27" cy="3" r="1.500" fill="#f25c31" /><circle cx="39" cy="15.500" r="1.500" fill="#6cb43d" />
              </svg>
            </SearchBox>
            <AppButton aria-label="Task view">
              <svg width="24" height="22" viewBox="0 0 24 22"><path d="M0 6h18v16H0z" fill="#282828" /><path d="M6 0h18v16H6z" fill="#fafafa" /><path d="M6 6h12v10H6z" fill="#aaa" /></svg>
            </AppButton>
            <AppButton aria-label="Microsoft 365 Copilot">
              <svg width="25" height="24" viewBox="0 0 25 24">
                <defs>
                  <linearGradient id="c1" x2=".2" y2="1"><stop stopColor="#1c7ee0" /><stop offset=".5" stopColor="#25b6c0" /><stop offset="1" stopColor="#e8d32a" /></linearGradient>
                  <linearGradient id="c2" x2="0" y2="1"><stop stopColor="#9a55e8" /><stop offset=".6" stopColor="#e4569a" /><stop offset="1" stopColor="#f98a3c" /></linearGradient>
                </defs>
                <path d="M8 1h9l2 5h-5c-3 0-3 11-7 11H3c-4 0-3-4-2-7C3 4 4 1 8 1z" fill="url(#c1)" />
                <path d="M13 1h4c2 0 2 2 3 5h-6z" fill="#1b49c4" />
                <path d="M16 6h6c4 0 3 5 2 8-1 4-3 7-7 7h-6c3 0 3-15 5-15z" fill="url(#c2)" />
                <path d="M6 16h19v8H6z" fill="#111" />
                <text x="15.500" y="23" textAnchor="middle" fontSize="7" fontWeight="700" fontFamily="Roboto, sans-serif" fill="#fff">M365</text>
              </svg>
            </AppButton>
            <AppButton $state="open" aria-label="File Explorer">
              <svg width="24" height="22" viewBox="0 0 24 22">
                <defs><linearGradient id="fo" x2="1" y2="1"><stop stopColor="#ffdf72" /><stop offset="1" stopColor="#f7b50e" /></linearGradient></defs>
                <path d="M0 1q0-1 1-1h8l2 2v6H0z" fill="#d8960a" /><path d="M0 5h9l2-3h13v20H0z" fill="url(#fo)" /><path d="M4 22v-5q0-2 2-2h12q2 0 2 2v5z" fill="#1374c6" /><path d="M8 18h8v1.500H8z" fill="#0b4b8d" />
              </svg>
            </AppButton>
            <AppButton aria-label="Edge">
              <svg width="24" height="24" viewBox="0 0 24 24">
                <defs><linearGradient id="ed" x2="1"><stop stopColor="#1b9de2" /><stop offset=".6" stopColor="#2fc2b4" /><stop offset="1" stopColor="#62d84c" /></linearGradient></defs>
                <circle cx="12" cy="12" r="12" fill="#0f7bd0" />
                <path d="M0 11C1 4 6 0 12 0c7 0 12 5 12 10 0 4-3 6-6 6-4 0-5-2-3.500-3.500C16 9 12 6 8 6.500 4 7 1 9 0 11z" fill="url(#ed)" />
                <path d="M9 9c-3 6 1 12 8 12 2 0 4-1 5-2-3 4-7 5-11 5-5-2-7-9-2-15z" fill="#0c4f9c" />
                <path d="M14.500 12.500C13 14 14 16 18 16c2 0 4-.5 5.500-2.500 0 2-1 4-2 5-6 2-11-1-10-5 .5-2 3-3 3-1z" fill="#eee" />
              </svg>
            </AppButton>
            <AppButton aria-label="Microsoft Store">
              <svg width="24" height="24" viewBox="0 0 24 24">
                <path d="M7 7V3q0-2 2-2h6q2 0 2 2v4" fill="none" stroke="#28c3ee" strokeWidth="2" /><path d="M0 6h24v15q0 3-3 3H3q-3 0-3-3z" fill="#174a8c" />
                <path d="M7 10h4.500v4.500H7z" fill="#f25022" /><path d="M12.500 10H17v4.500h-4.500z" fill="#7fba00" /><path d="M7 15.500h4.500V20H7z" fill="#00a4ef" /><path d="M12.500 15.500H17V20h-4.500z" fill="#ffb900" />
              </svg>
            </AppButton>
            <AppButton $state="open" aria-label="Chrome">
              <svg width="24" height="24" viewBox="0 0 24 24">
                <circle cx="12" cy="12" r="12" fill="#fbc116" />
                <path d="M12 12L1.600 6A12 12 0 0122.400 6z" fill="#ea4335" /><path d="M12 6h10.400a12 12 0 00-20.800 0L6.800 15z" fill="#e33b2e" />
                <path d="M1.600 6a12 12 0 0010.400 18l5.200-9H12L6.800 15z" fill="#2da94f" />
                <circle cx="12" cy="12" r="6" fill="#fff" /><circle cx="12" cy="12" r="4.700" fill="#2f7bea" />
              </svg>
            </AppButton>
            <AppButton $state="open" aria-label="Paint">
              <svg width="24" height="24" viewBox="0 0 24 24">
                <path d="M13 1c7 0 10 5 9 10-1 4-5 4-5 7 0 4-3 6-7 5-2-1 0-4-2-6-2-3-7 0-7-5C1 6 6 1 13 1z" fill="#2aaee8" />
                <circle cx="7" cy="8" r="2" fill="#2f9b42" /><circle cx="12" cy="5" r="2" fill="#f8c51c" /><circle cx="17" cy="6" r="2" fill="#f07a22" /><circle cx="4.500" cy="13" r="1.800" fill="#e04a2c" />
                <path d="M16 8h4v6h-4z" fill="#e9c48a" /><path d="M17 13h3v9q-1.500 2-3 0z" fill="#965b23" />
              </svg>
            </AppButton>
            <AppButton $state="active" aria-label="Word">
              <svg width="24" height="24" viewBox="0 0 24 24">
                <path d="M4 1l18-1v20l-18 2z" fill="#3f65b0" /><path d="M1 3l3-2v21H1z" fill="#9ab5e0" /><path d="M7 4l15-1v19l-13 1z" fill="#f4f8ff" stroke="#8ca5cf" strokeWidth=".7" />
                <text x="7" y="13" fontSize="10" fontWeight="700" fontFamily="Liberation Serif, serif" fill="#1f4798">W</text>
                <path d="M17 7h4M17 9.500h4M17 12h4M9 15.500h12M9 18.500h12" stroke="#5879b6" />
              </svg>
            </AppButton>
          </Apps>
          <Tray>
            <button aria-label="Hidden icons"><svg width="11" height="7" viewBox="0 0 11 7"><path d="M.7 6.200L5.500 1.400l4.800 4.800" fill="none" stroke="#222" strokeWidth="1.300" /></svg></button>
            <button>ENG</button>
            <TrayIcons aria-label="Network and volume">
              <svg width="17" height="17" viewBox="0 0 17 17" fill="none" stroke="#222" strokeWidth="1.100"><path d="M10 2H2.500Q1 2 1 3.500v7Q1 12 2.500 12H13V9M4 15.500h8M7 12v3.500M12 1h4v4.500l-1 1h-2l-1-1zM14 7v6M12 3h4" /></svg>
              <svg width="17" height="16" viewBox="0 0 17 16" fill="none" stroke="#222" strokeWidth="1.100"><path d="M1 6h2.500L7 2.500v11L3.500 10H1zM9 6q1.500 2 0 4M11 4.200q3 3.800 0 7.600" /><path d="M13 2.500q4 5.500 0 11" stroke="#aaa" /></svg>
            </TrayIcons>
            <Clock>12:12 AM<br />11/20/2025</Clock>
          </Tray>
        </Taskbar>
      </Window>
    </>
  );
}
